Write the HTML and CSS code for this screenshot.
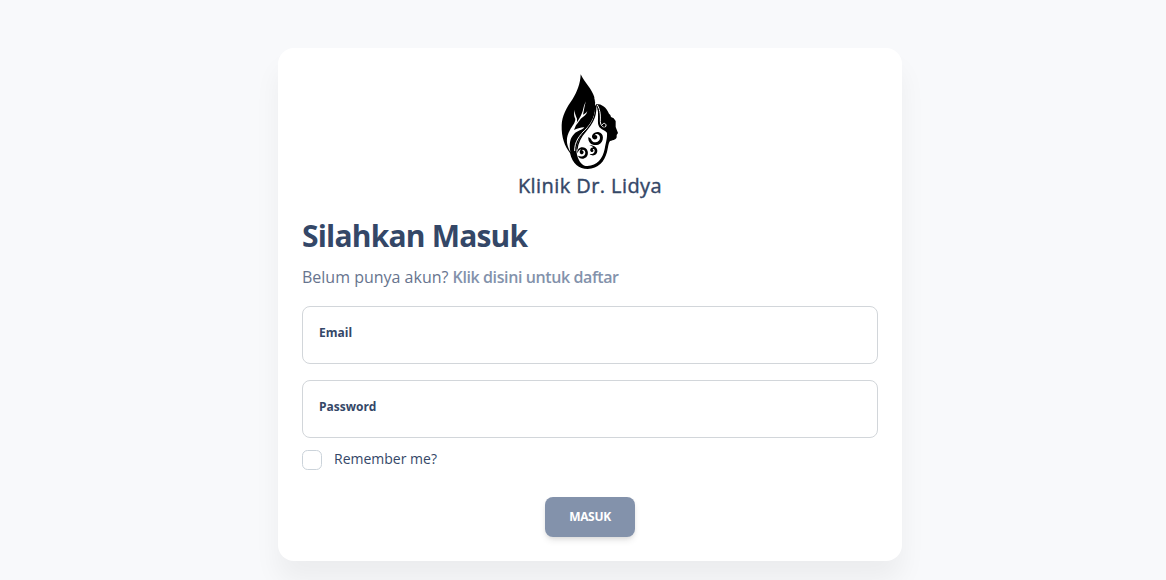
FILE: index.html
```html
<!DOCTYPE html>
<html lang="id">
<head>
<meta charset="utf-8">
<title>Klinik Dr. Lidya</title>
<link rel="stylesheet" href="styles.css">
</head>
<body>
<main class="card">
  <div class="brand">
    <svg class="logo" viewBox="0 0 240 312" aria-hidden="true">
      <!-- leaf, hair and face silhouette -->
      <path d="M92 13C91 43 81 65 68 87C50 113 36 136 35 166C34 202 44 229 60 249C67 281 87 297 113 297C145 296 163 276 171 246C175 230 175 219 180 213C190 210 201 207 200 200L200 195L204 189L197 171L197 153L191 145L183 141L181 135L177 131C169 111 154 101 137 102C136 83 127 65 117 51C106 37 99 26 92 13Z"/>
      <!-- open face area -->
      <path class="cut" d="M136 112C136 143 121 166 102 188C84 208 76 231 81 254C87 277 98 288 112 288C142 287 158 266 164 237C168 216 172 205 171 189C170 181 151 180 146 167C140 151 150 125 140 107Z"/>
      <!-- leaf veins -->
      <path class="cut" d="M108 94C98 112 101 123 92 138C86 150 79 159 72 169C82 165 88 151 94 145C102 139 110 134 112 123C108 130 102 132 99 134C103 118 103 108 108 94Z"/>
      <path class="cut" d="M74 119C71 132 72 139 76 147C76 159 66 168 60 180C47 202 48 222 61 246C57 219 60 204 73 191C83 182 97 180 103 172C91 172 80 177 72 180C77 167 83 157 81 146C78 137 74 132 74 119Z"/>
      <!-- stem and hair strands -->
      <path class="lines" stroke-width="3" d="M135 84C142 125 132 150 111 174C87 197 73 216 74 242"/>
      <path class="ink" stroke-width="4" d="M137 108C139 143 123 164 107 183C89 203 83 219 81 237"/>
      <path class="lines" stroke-width="3" d="M142 105C153 123 151 142 151 155C152 170 164 177 168 168C169 159 159 157 157 164"/>
      <path class="ink" stroke-width="3" d="M141 110C150 127 143 145 147 161C150 172 157 176 164 174"/>
      <!-- curls -->
      <path d="M115 201C113 220 129 229 145 224C164 216 163 188 145 186C130 185 121 199 129 206C136 212 145 205 141 198C138 194 135 195 134 197C135 189 150 191 150 203C150 217 128 224 123 207C121 203 117 204 115 201Z"/>
      <path d="M82 250C80 235 95 227 107 235C119 245 114 264 100 266C92 267 86 263 84 257C96 263 106 257 106 248C106 239 97 237 95 241C102 242 103 250 97 253C89 254 86 243 94 237C87 239 84 244 82 250Z"/>
      <path d="M118 226C132 225 142 233 142 243C142 255 128 261 119 252C128 253 134 249 134 242C134 237 130 236 128 238C133 241 130 248 124 246C117 242 122 232 130 232C127 229 123 227 118 226Z"/>
    </svg>
    <span class="brand-name">Klinik Dr. Lidya</span>
  </div>
  <h1 class="title">Silahkan Masuk</h1>
  <p class="signup">Belum punya akun? <a class="signup-link">Klik disini untuk daftar</a></p>
  <form class="form">
    <label class="field">Email</label>
    <label class="field">Password</label>
    <label class="remember"><input class="check" type="checkbox"><span>Remember me?</span></label>
    <button class="submit" type="button">MASUK</button>
  </form>
</main>
</body>
</html>
```
FILE: styles.css
```css
* { box-sizing: border-box; }
body {
  margin: 0;
  height: 580px;
  overflow: hidden;
  padding: 48px 264px 0 278px;
  background: #f8f9fb;
  color: #344767;
  font-family: "Open Sans", sans-serif;
}
.card {
  height: 513px;
  padding: 22px 24px 24px;
  border-radius: 16px;
  background: #fff;
  box-shadow: 0 20px 27px 0 rgba(0, 0, 0, .05);
}
.brand { display: flex; flex-direction: column; align-items: center; }
.logo { width: 80px; height: 104px; fill: #000; }
.cut { fill: #fff; }
.ink, .lines { fill: none; stroke: #000; stroke-linecap: round; }
.lines { stroke: #fff; }
.brand-name {
  margin-top: -2px;
  font-size: 20px;
  line-height: 28px;
  font-weight: 500;
  letter-spacing: .42px;
  -webkit-text-stroke: .4px #344767;
}
.title { margin: 15px 0 0; font-size: 30px; line-height: 41px; font-weight: 700; letter-spacing: -.8px; }
.signup { margin: 9px 0 17px; color: #67748e; font-size: 16px; line-height: 24px; }
.signup-link { color: #8392ab; font-weight: 600; letter-spacing: -.4px; }
.form { display: flex; flex-direction: column; }
.field {
  height: 58px;
  margin-bottom: 16px;
  padding: 17px 16px;
  border: 1px solid #d2d6da;
  border-radius: 8px;
  font-size: 12px;
  line-height: 18px;
  font-weight: 700;
}
.remember { display: flex; align-items: center; gap: 12px; height: 24px; margin-top: -6px; font-size: 14px; line-height: 24px; }
.remember span { margin-top: -2px; }
.check {
  appearance: none;
  width: 20px;
  height: 20px;
  margin: 0;
  border: 1px solid #cbd3da;
  border-radius: 5.6px;
}
.submit {
  align-self: center;
  width: 90px;
  height: 40px;
  margin-top: 25px;
  padding: 0;
  border: 0;
  border-radius: 8px;
  background: #8392ab;
  box-shadow: 0 4px 7px -1px rgba(0, 0, 0, .11), 0 2px 4px -1px rgba(0, 0, 0, .07);
  color: #fff;
  font: 700 12px/18px "Open Sans", sans-serif;
  letter-spacing: -.3px;
}
```
